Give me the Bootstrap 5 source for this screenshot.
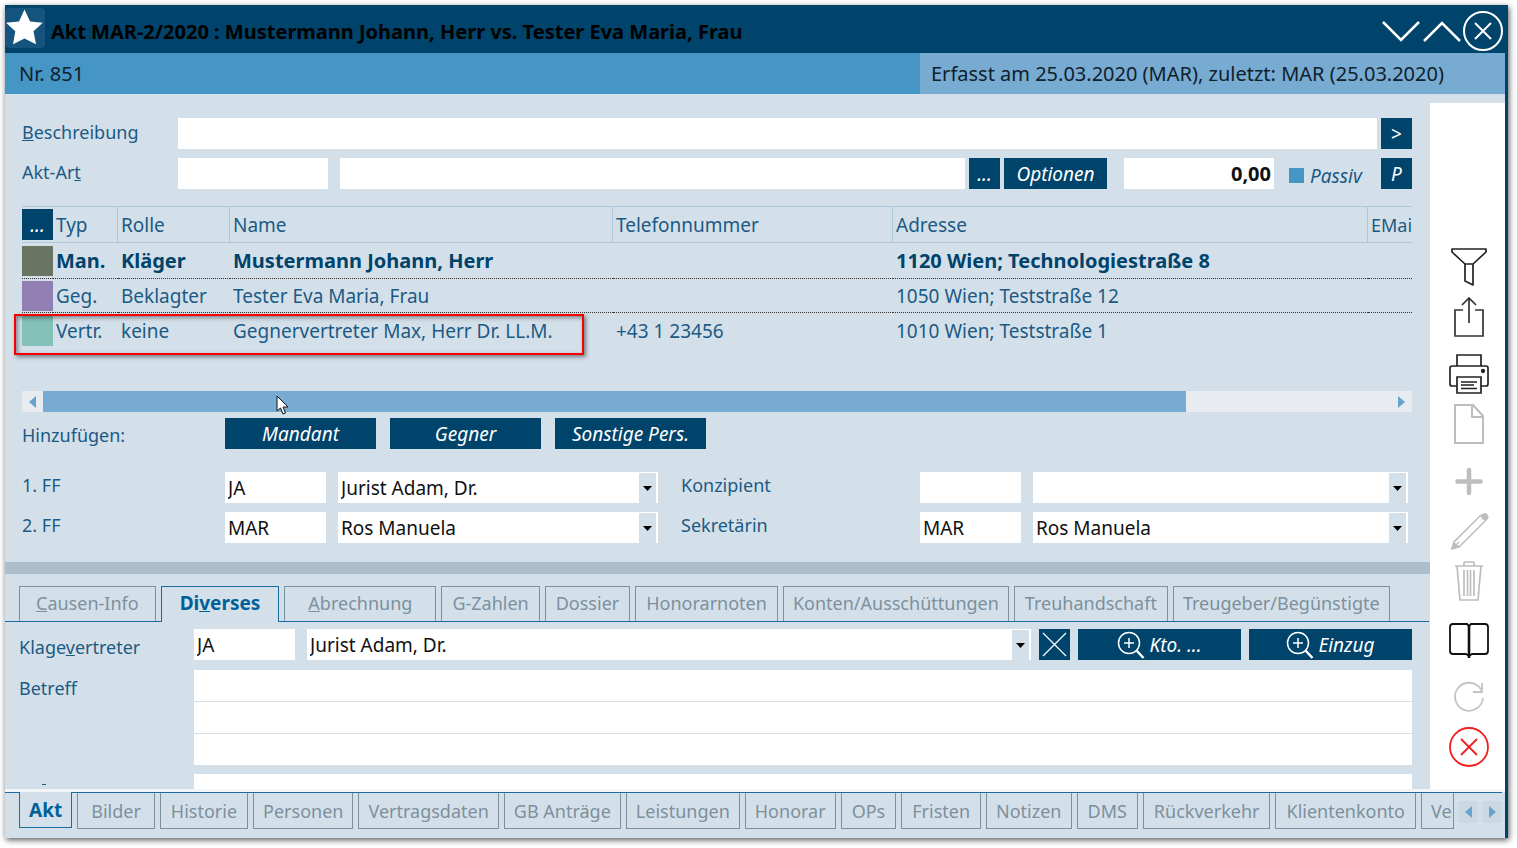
<!DOCTYPE html>
<html lang="de">
<head>
<meta charset="utf-8">
<meta name="viewport" content="width=device-width, initial-scale=1">
<title>Akt MAR-2/2020</title>
<link href="https://cdn.jsdelivr.net/npm/bootstrap@5.3.0/dist/css/bootstrap.min.css" rel="stylesheet">
<style>
:root{--navy:#00436b;--mid:#4595c5;--sky:#78abd1;--pane:#d4e0e9;--ink:#1b5a85;--line:#afc8da;--tab:#7c909d;--tabline:#1a6c9f}
body{font-family:"Noto Sans",sans-serif;font-size:19px;line-height:26px;color:var(--ink);background:#fff;height:100vh;padding:5px 9px 10px 5px;overflow:hidden}
.akt-window{background:var(--pane);box-shadow:1px 2px 6px rgba(0,0,0,.65)}
.title-bar{background:var(--navy);height:48px;color:#000;flex:none}
.title-bar h1{font-size:20px;line-height:26px;font-weight:700;padding:14px 0 0 6px}
.title-bar .controls{padding:3px 4px 0 0}
.star-box{width:40px;height:40px;background:#14547f;border-radius:4px;margin-top:3px}
.plain{border:0;background:none;padding:0;display:block;line-height:0}
.frame{border-right:3px solid var(--navy);min-height:0}
.work{min-height:0}
.info-bar{height:41px;background:var(--mid);color:#10212d;font-size:20px;flex:none}
.info-bar .number{padding-left:14px}
.info-bar .stamp{background:var(--sky);width:585px;padding-left:11px}
.side{width:75px;background:#fff;margin-top:9px;padding:144px 0 0 2px;gap:17px}
.side .grp{display:flex;flex-direction:column;gap:10px}
.side .grp-book{padding-top:2px}
.side svg,.title-bar svg{display:block;fill:none}
.upper{padding:24px 18px 0 17px;height:468px}
.caption{width:156px;flex:none;line-height:29px;font-size:18px}
.field{height:31px;border:0;border-radius:0;background-color:#fff;padding:0 3px;color:#111;font-size:19px;line-height:26px;min-width:0;width:100%}
.w-code{width:101px;flex:none}
.w-art{width:150px;flex:none}
.row-gap{margin-bottom:9px}
.after-code{margin-left:12px}
.amount{margin-left:17px;text-align:right;font-weight:700;font-size:20px}
select.field{appearance:none;background-image:url("data:image/svg+xml,%3Csvg xmlns='http://www.w3.org/2000/svg' width='19' height='31'%3E%3Cpath fill='%23d4e0e9' d='M0 1h17v30H0z'/%3E%3Cpath d='M4 14h9l-4.500 5z'/%3E%3C/svg%3E");background-repeat:no-repeat;background-position:right top}
.cmd{background:var(--navy);color:#fff;border:0;border-radius:0;height:31px;font-size:19px;line-height:26px;font-style:italic;padding:0;display:flex;align-items:center;justify-content:center;flex:none}
.cmd:hover{background:var(--navy);color:#fff}
.cmd-sq{width:31px}.cmd-md{width:103px}.cmd-lg{width:151px}.cmd-xl{width:163px}
.tick{appearance:none;width:15px;height:15px;background:var(--mid);margin:3px 0 0 15px}
.tick-label{width:71px;margin-left:6px;flex:none;font-style:italic;padding-top:5px}
.grid-wrap{margin-top:17px;height:185px}
.party{table-layout:fixed;width:100%;border-collapse:separate;border-spacing:0}
.party th,.party td{padding:0 0 0 3px;white-space:nowrap;overflow:hidden;font-weight:400;height:35px}
.party th{border-top:1px solid var(--line);border-bottom:1px solid var(--line);border-right:1px solid var(--line);height:37px}
.party th:first-child,.party td:first-child{padding:0}
.party th:first-child,.party th:last-child{border-right:0}
.party th:last-child{font-size:18px}
.party .lead-row td{font-weight:700;font-size:20px;color:var(--navy);height:36px}
.party .second-row td{height:34px}
.party .dots td{border-bottom:1px dotted #333}
.swatch{display:block;width:31px;height:30px}
.mark-box{left:-8px;top:108px;width:570px;height:41px;border:2px solid #f60000;box-shadow:2px 2px 4px rgba(0,0,0,.45),inset 2px 2px 4px rgba(0,0,0,.4);pointer-events:none}
.pointer{left:254px;top:189px}
.hbar{height:21px;background:#e8ecf1}
.hbar .btnlet{width:21px;display:flex;align-items:center;justify-content:center;height:21px}
.hbar .thumb{background:var(--sky);flex:1142 1 0}
.hbar .rest{flex:205 1 0}
.add-row{margin-top:6px}
.add-row .add-label{width:203px;flex:none;padding-top:4px;font-size:18px}
.add-row .add-set{gap:14px}
.people{display:grid;grid-template-columns:203px 101px minmax(0,332fr) 262px 101px minmax(0,387fr);row-gap:9px;margin:23px 4px 0 0}
.people label{line-height:26px;font-size:18px}
.people .third{margin-left:12px;width:calc(100% - 12px)}
.people .second-label{padding-left:23px}
.splitter{height:12px;background:#aebdca}
.tabs{gap:5px;flex-wrap:nowrap}
.tabs .nav-link{color:var(--tab);border:1px solid var(--tab);padding:0 9px;white-space:nowrap;height:35px;line-height:33px;border-radius:0;text-align:center;font-size:18px;flex:none}
.tabs .nav-link.active{color:#00609a;border-color:var(--tabline);font-weight:700;font-size:19px}
.tabs .pad-s{padding:0 10px}.tabs .pad-m{padding:0 13px}.tabs .pad-l{padding:0 16px}.tabs .pad-xl{padding:0 23px}
.tabs-top{margin:12px 1px 0 0;padding-left:14px;border-bottom:1px solid var(--tabline)}
.tabs-top .nav-link{border-bottom:0}
.tabs-top .nav-link.active{height:36px;margin-bottom:-1px;padding:0 18px;background:var(--pane)}
.lower{padding:7px 18px 0 14px;overflow:hidden}
.cap-low{width:175px;flex:none;line-height:28px;font-size:18px}
.memo-row{margin-top:9px}
.memo{height:96px;padding:2px 3px;line-height:32px;resize:none;background-image:linear-gradient(to bottom,transparent 31px,var(--pane) 31px);background-size:100% 32px}
.notch{width:4px;height:1px;background:var(--ink);margin:10px 0 0 23px}
.tabs-foot{border-top:3px solid #f2f6f9;height:49px;padding-right:3px}
.tabs-foot .rail{border-top:1px solid var(--tabline);padding-left:14px}
.tabs-foot .nav{min-width:0}
.tabs-foot .nav-link{border-top:0;height:36px;line-height:36px}
.tabs-foot .nav-link.active{margin-top:-1px;padding:0 9px;background:var(--pane)}
.tabs-foot .nav-link.last-tab{flex:1 1 0;min-width:0;padding-right:0;text-align:left}
.pager{width:20px;height:22px;background:#cbd9e3;display:flex;align-items:center;justify-content:center}
</style>
</head>
<body>
<div class="akt-window d-flex flex-column h-100">
  <header class="title-bar d-flex">
    <div class="star-box flex-shrink-0"><svg width="40" height="38" viewBox="0 0 40 38"><path fill="#fff" d="M19.500 1.500l5.600 12 12.700 1.200-9.300 8.500 2.500 13-11.500-5.700L8 36.200l2.300-13L1 14.700l13-1.200z"/></svg></div>
    <h1 class="mb-0 flex-grow-1">Akt MAR-2/2020 : Mustermann Johann, Herr vs. Tester Eva Maria, Frau</h1>
    <div class="controls d-flex">
      <button class="plain" aria-label="Nach unten"><svg width="40" height="40" viewBox="0 0 40 40" stroke="#fff" stroke-width="2.500"><path d="M1 11l18 18 18-18"/></svg></button>
      <button class="plain" aria-label="Nach oben"><svg width="41" height="40" viewBox="0 0 41 40" stroke="#fff" stroke-width="2.500"><path d="M2 30l18-18 18 18"/></svg></button>
      <button class="plain" aria-label="Schließen"><svg width="41" height="40" viewBox="0 0 41 40" stroke="#fff" stroke-width="2"><circle cx="20" cy="20" r="19"/><path d="M12 12l16 16M28 12L12 28"/></svg></button>
    </div>
  </header>
  <div class="frame d-flex flex-column flex-grow-1">
    <div class="info-bar d-flex">
      <div class="number flex-grow-1 d-flex align-items-center">Nr. 851</div>
      <div class="stamp d-flex align-items-center">Erfasst am 25.03.2020 (MAR), zuletzt: MAR (25.03.2020)</div>
    </div>
    <div class="work d-flex flex-grow-1">
      <main class="flex-grow-1 d-flex flex-column overflow-hidden">
        <section class="upper flex-shrink-0">
          <div class="d-flex row-gap">
            <label class="caption" for="besch"><u>B</u>eschreibung</label>
            <input id="besch" class="field form-control"><button class="cmd btn cmd-sq ms-1 fst-normal">&gt;</button>
          </div>
          <div class="d-flex">
            <label class="caption" for="art">Akt-Ar<u>t</u></label>
            <input id="art" class="field form-control w-art">
            <input aria-label="Akt-Art Bezeichnung" class="field form-control after-code">
            <button class="cmd btn cmd-sq ms-1">...</button><button class="cmd btn cmd-md ms-1">Optionen</button>
            <input aria-label="Betrag" class="field form-control w-art amount" value="0,00">
            <input id="passiv" type="checkbox" class="tick align-self-center flex-shrink-0"><label for="passiv" class="tick-label">Passiv</label>
            <button class="cmd btn cmd-sq">P</button>
          </div>
          <div class="grid-wrap position-relative">
            <table class="party">
              <colgroup><col style="width:31px"><col style="width:65px"><col style="width:112px"><col style="width:383px"><col style="width:280px"><col style="width:475px"><col></colgroup>
              <thead><tr><th><button class="cmd btn cmd-sq">...</button></th><th>Typ</th><th>Rolle</th><th>Name</th><th>Telefonnummer</th><th>Adresse</th><th>EMai</th></tr></thead>
              <tbody>
                <tr class="lead-row dots"><td><span class="swatch" style="background:#697562"></span></td><td>Man.</td><td>Kläger</td><td>Mustermann Johann, Herr</td><td></td><td>1120 Wien; Technologiestraße 8</td><td></td></tr>
                <tr class="second-row dots"><td><span class="swatch" style="background:#917fb3"></span></td><td>Geg.</td><td>Beklagter</td><td>Tester Eva Maria, Frau</td><td></td><td>1050 Wien; Teststraße 12</td><td></td></tr>
                <tr><td><span class="swatch" style="background:#83c0b8"></span></td><td>Vertr.</td><td>keine</td><td>Gegnervertreter Max, Herr Dr. LL.M.</td><td>+43 1 23456</td><td>1010 Wien; Teststraße 1</td><td></td></tr>
              </tbody>
            </table>
            <div class="mark-box position-absolute"></div>
            <svg class="pointer position-absolute" width="14" height="21" viewBox="0 0 14 21"><path d="M1 1v15l3.500-3 2.500 6 2.500-1-2.500-6h5z" fill="#fff" stroke="#111"/></svg>
          </div>
          <div class="hbar d-flex">
            <button class="plain btnlet" aria-label="Links"><svg width="7" height="12"><path fill="#67a3cd" d="M7 0v12L0 6z"/></svg></button>
            <div class="thumb"></div><div class="rest"></div>
            <button class="plain btnlet" aria-label="Rechts"><svg width="7" height="12"><path fill="#67a3cd" d="M0 0v12l7-6z"/></svg></button>
          </div>
          <div class="d-flex add-row">
            <span class="add-label">Hinzufügen:</span>
            <div class="d-flex add-set"><button class="cmd btn cmd-lg">Mandant</button><button class="cmd btn cmd-lg">Gegner</button><button class="cmd btn cmd-lg">Sonstige Pers.</button></div>
          </div>
          <div class="people">
            <label for="ff1">1. FF</label><input id="ff1" class="field form-control" value="JA">
            <select aria-label="1. FF Name" class="field third"><option>Jurist Adam, Dr.</option></select>
            <label class="second-label" for="konz">Konzipient</label><input id="konz" class="field form-control">
            <select aria-label="Konzipient Name" class="field third"><option></option></select>
            <label for="ff2">2. FF</label><input id="ff2" class="field form-control" value="MAR">
            <select aria-label="2. FF Name" class="field third"><option>Ros Manuela</option></select>
            <label class="second-label" for="sekr">Sekretärin</label><input id="sekr" class="field form-control" value="MAR">
            <select aria-label="Sekretärin Name" class="field third"><option>Ros Manuela</option></select>
          </div>
        </section>
        <div class="splitter flex-shrink-0"></div>
        <nav class="nav tabs tabs-top flex-shrink-0">
          <a class="nav-link pad-l" href="#"><u>C</u>ausen-Info</a><a class="nav-link active" href="#">Di<u>v</u>erses</a><a class="nav-link pad-xl" href="#"><u>A</u>brechnung</a><a class="nav-link pad-s" href="#">G-Zahlen</a><a class="nav-link pad-s" href="#">Dossier</a><a class="nav-link pad-s" href="#">Honorarnoten</a><a class="nav-link" href="#">Konten/Ausschüttungen</a><a class="nav-link pad-s" href="#">Treuhandschaft</a><a class="nav-link" href="#">Treugeber/Begünstigte</a>
        </nav>
        <section class="lower flex-grow-1">
          <div class="d-flex">
            <label class="cap-low pt-1" for="klage">Klage<u>v</u>ertreter</label>
            <input id="klage" class="field form-control w-code" value="JA">
            <select aria-label="Klagevertreter Name" class="field after-code"><option>Jurist Adam, Dr.</option></select>
            <button class="cmd btn cmd-sq ms-2" aria-label="Entfernen"><svg width="25" height="25" fill="none" stroke="#fff" stroke-width="1.200"><path d="M1 1l23 23M24 1L1 24"/></svg></button>
            <button class="cmd btn cmd-xl ms-2 gap-1"><svg width="28" height="28" fill="none" stroke="#fff"><circle cx="12" cy="12" r="10.500" stroke-width="1.500"/><path d="M12 7v10M7 12h10" stroke-width="1.500"/><path d="M19.500 19.500l7 7.500" stroke-width="2.500"/></svg><span>Kto. ...</span></button>
            <button class="cmd btn cmd-xl ms-2 gap-1"><svg width="28" height="28" fill="none" stroke="#fff"><circle cx="12" cy="12" r="10.500" stroke-width="1.500"/><path d="M12 7v10M7 12h10" stroke-width="1.500"/><path d="M19.500 19.500l7 7.500" stroke-width="2.500"/></svg><span>Einzug</span></button>
          </div>
          <div class="d-flex memo-row">
            <label class="cap-low pt-1" for="betreff">Betreff</label><textarea id="betreff" class="field form-control memo"></textarea>
          </div>
          <div class="d-flex mt-2"><div class="cap-low"><div class="notch"></div></div><input aria-label="Weiteres Feld" class="field form-control"></div>
        </section>
      </main>
      <aside class="side d-flex flex-column align-items-center flex-shrink-0">
        <div class="grp">
          <button class="plain" aria-label="Filter"><svg width="42" height="40" stroke="#222" stroke-width="1.700" stroke-linejoin="round"><path d="M4 2h34v3L25 17v21l-8-4V17L4 5zM17 17h8"/></svg></button>
          <button class="plain" aria-label="Teilen"><svg width="42" height="40" stroke="#333" stroke-width="1.700"><path d="M15 13H7v26h28V13h-8M21 26V1M14 8l7-7 7 7"/></svg></button>
        </div>
        <div class="grp">
          <button class="plain" aria-label="Drucken"><svg width="42" height="40" stroke="#222" stroke-width="1.700"><path d="M9 12V1h24v11M9 32H4q-2 0-2-2V14q0-2 2-2h34q2 0 2 2v16q0 2-2 2h-5M9 23h24v16H9zM13 28h16M13 31h13M13 34.500h16"/><circle cx="35" cy="17" r="1.300" fill="#222"/></svg></button>
          <button class="plain" aria-label="Neu"><svg width="42" height="40" stroke="#bdbdbd" stroke-width="2"><path d="M7 1h18l10 11v27H7zM24 1v12h11"/></svg></button>
        </div>
        <div class="grp">
          <button class="plain" aria-label="Hinzufügen"><svg width="42" height="40" stroke="#bdbdbd" stroke-width="4.500" stroke-linecap="round"><path d="M21 9v23M9.500 20.500h23"/></svg></button>
          <button class="plain" aria-label="Bearbeiten"><svg width="42" height="40" stroke="#bdbdbd" stroke-width="1.500"><path d="M4 38l2-7L33 4M11 36L38 9M9 33L35 7"/><path fill="#bdbdbd" d="M4 38l2-6 5 4zM34 4q2-2 4-1 3 2 1 5l-2 1-4-4z"/><path stroke="#fff" stroke-width="2" d="M11 31L34 8"/></svg></button>
          <button class="plain" aria-label="Löschen"><svg width="42" height="40" stroke="#bdbdbd" stroke-width="1.700"><path d="M7 5h28M16 5V2q0-1 1-1h8q1 0 1 1v3M9 5l3 34h18l3-34M16 9v26M19.500 9v26M22.500 9v26M26 9v26"/></svg></button>
        </div>
        <div class="grp grp-book"><button class="plain" aria-label="Buch"><svg width="42" height="40" stroke="#111" stroke-width="1.800"><path d="M21 6l-2-2H5Q2 4 2 7v24q0 3 3 3h13l3 2 3-2h13q3 0 3-3V7q0-3-3-3H23z"/><path stroke-width="2.600" d="M21 6v32"/></svg></button></div>
        <div class="grp">
          <button class="plain" aria-label="Aktualisieren"><svg width="42" height="40" stroke="#c4c4c4" stroke-width="1.800"><path d="M35 21a14 14 0 1 1-3-10l2 3M34 6v9h-9"/></svg></button>
          <button class="plain" aria-label="Abbrechen"><svg width="42" height="40" stroke="#f01e1e" stroke-width="1.800"><circle cx="21" cy="20" r="19"/><path d="M13 12l16 16M29 12L13 28"/></svg></button>
        </div>
      </aside>
    </div>
    <footer class="tabs-foot flex-shrink-0">
      <div class="rail d-flex">
        <nav class="nav tabs flex-grow-1">
          <a class="nav-link active" href="#">Akt</a><a class="nav-link pad-m" href="#">Bilder</a><a class="nav-link pad-s" href="#">Historie</a><a class="nav-link" href="#">Personen</a><a class="nav-link" href="#">Vertragsdaten</a><a class="nav-link" href="#">GB Anträge</a><a class="nav-link" href="#">Leistungen</a><a class="nav-link" href="#">Honorar</a><a class="nav-link pad-s" href="#">OPs</a><a class="nav-link pad-s" href="#">Fristen</a><a class="nav-link" href="#">Notizen</a><a class="nav-link pad-s" href="#">DMS</a><a class="nav-link pad-s" href="#">Rückverkehr</a><a class="nav-link pad-s" href="#">Klientenkonto</a><a class="nav-link last-tab" href="#">Ve</a>
        </nav>
        <div class="d-flex gap-1 pt-2 ms-1"><button class="plain pager" aria-label="Zurück"><svg width="7" height="12"><path fill="#67a3cd" d="M7 0v12L0 6z"/></svg></button><button class="plain pager" aria-label="Weiter"><svg width="7" height="12"><path fill="#67a3cd" d="M0 0v12l7-6z"/></svg></button></div>
      </div>
    </footer>
  </div>
</div>
<script src="https://cdn.jsdelivr.net/npm/bootstrap@5.3.0/dist/js/bootstrap.bundle.min.js"></script>
</body>
</html>
